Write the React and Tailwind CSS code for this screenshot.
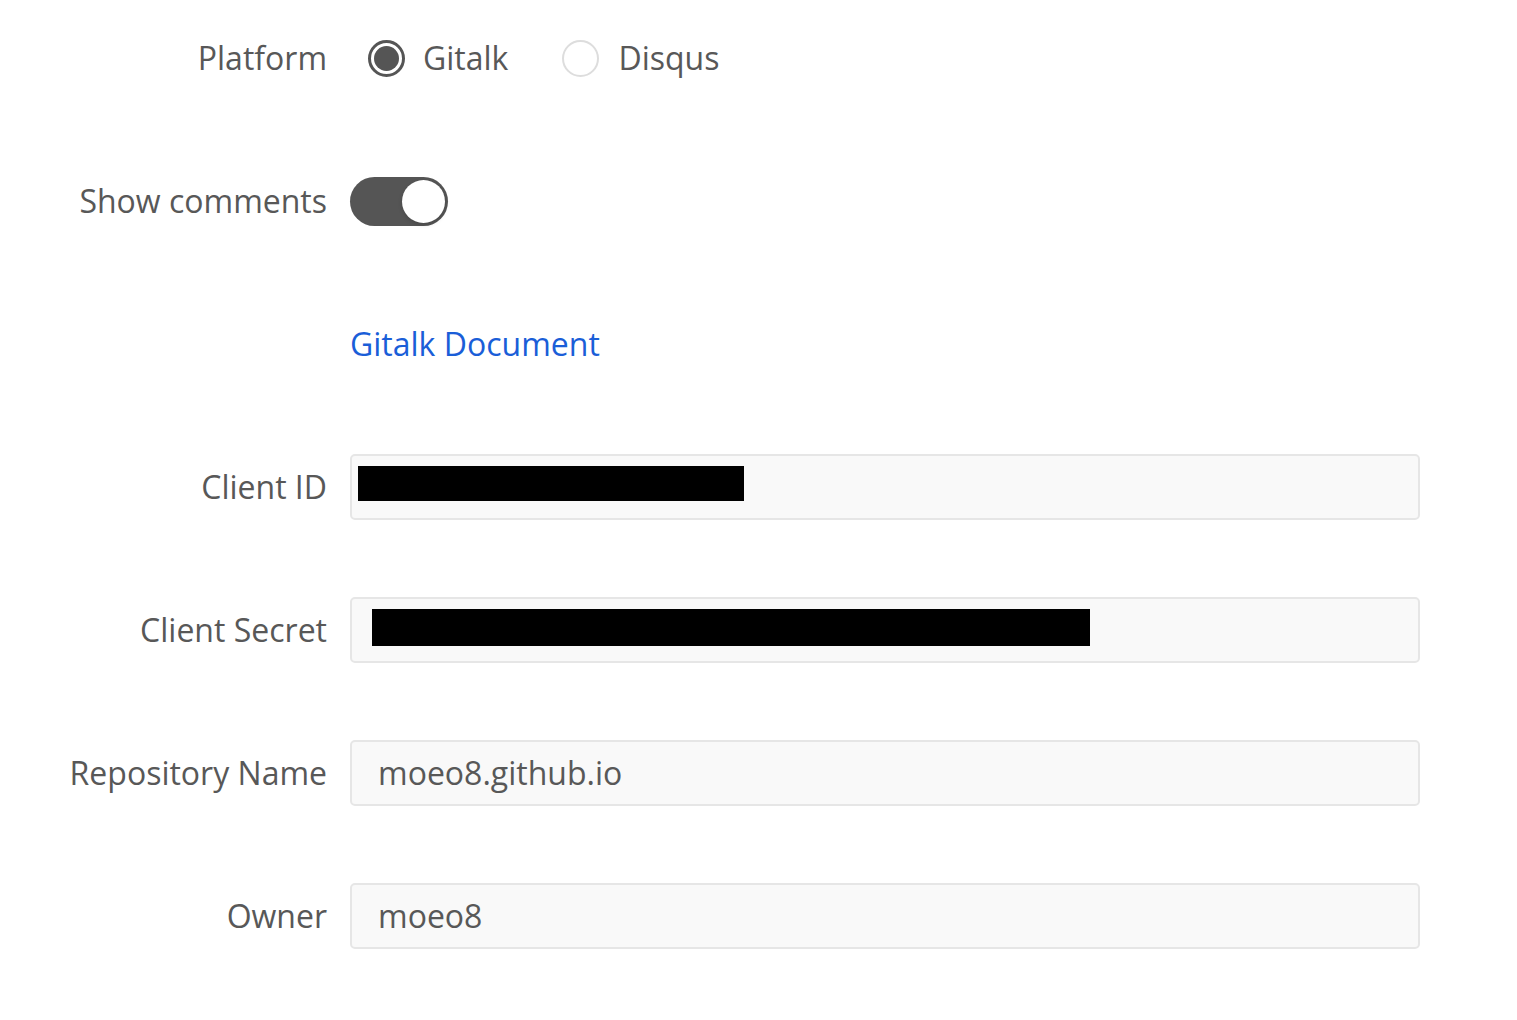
import React, { useState } from 'react';

const labelCls = "text-right text-[32px] text-[#585858] leading-none whitespace-nowrap";
const inputBox = "h-[66px] w-[1070px] bg-[#f9f9f9] border-2 border-[#e6e6e6] rounded-[5px] flex items-center";

const Row = ({ label, children }) => (
  <div className="flex items-center h-[66px]">
    <div className="w-[327px]">
      <div className={labelCls}>{label}</div>
    </div>
    <div className="ml-[23px] flex items-center">{children}</div>
  </div>
);

const App = () => {
  const [platform, setPlatform] = useState('gitalk');
  const [show, setShow] = useState(true);

  return (
    <div className="w-[1517px] h-[1020px] bg-white pt-[25px]" style={{ fontFamily: '"Open Sans", "Noto Sans", sans-serif' }}>
      <div className="flex flex-col gap-[77px]">
        <Row label="Platform">
          <button className="flex items-center ml-[18px]" onClick={() => setPlatform('gitalk')}>
            <span className={"w-[37px] h-[37px] rounded-full flex items-center justify-center " + (platform === 'gitalk' ? "border-[3px] border-[#555]" : "border-2 border-[#ddd]")}>
              {platform === 'gitalk' && <span className="w-[25px] h-[25px] rounded-full bg-[#555]" />}
            </span>
            <span className="ml-[18px] text-[32px] text-[#585858] leading-none">Gitalk</span>
          </button>
          <button className="flex items-center ml-[54px]" onClick={() => setPlatform('disqus')}>
            <span className={"w-[37px] h-[37px] rounded-full flex items-center justify-center " + (platform === 'disqus' ? "border-[3px] border-[#555]" : "border-2 border-[#ddd]")}>
              {platform === 'disqus' && <span className="w-[25px] h-[25px] rounded-full bg-[#555]" />}
            </span>
            <span className="ml-[19px] text-[32px] text-[#585858] leading-none">Disqus</span>
          </button>
        </Row>

        <Row label="Show comments">
          <button
            onClick={() => setShow(!show)}
            className={"w-[98px] h-[49px] rounded-full flex items-center px-[3px] " + (show ? "bg-[#555] justify-end" : "bg-[#e5e5e5] justify-start")}
          >
            <span className="w-[43px] h-[43px] rounded-full bg-white shadow-[0_2px_4px_rgba(0,0,0,0.15)]" />
          </button>
        </Row>

        <Row label="">
          <a href="#" className="text-[32px] text-[#1a5ed8] leading-none">Gitalk Document</a>
        </Row>

        <Row label="Client ID">
          <div className={inputBox}>
            <div className="ml-[6px] mb-[8px] w-[386px] h-[35px] bg-black" />
          </div>
        </Row>

        <Row label="Client Secret">
          <div className={inputBox}>
            <div className="ml-[20px] mb-[6px] w-[718px] h-[37px] bg-black" />
          </div>
        </Row>

        <Row label="Repository Name">
          <div className={inputBox}>
            <span className="ml-[26px] text-[32px] text-[#585858] leading-none">moeo8.github.io</span>
          </div>
        </Row>

        <Row label="Owner">
          <div className={inputBox}>
            <span className="ml-[26px] text-[32px] text-[#585858] leading-none">moeo8</span>
          </div>
        </Row>
      </div>
    </div>
  );
};

export default App;
